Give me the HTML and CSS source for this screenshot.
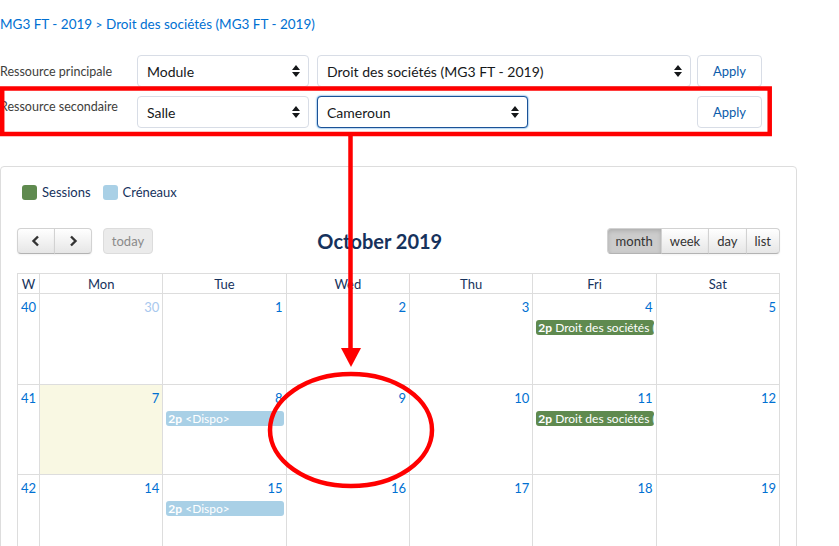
FILE: index.html
```html
<!DOCTYPE html>
<html lang="fr">
<head>
  <meta charset="UTF-8">
  <title>Planning - Droit des sociétés</title>
  <link rel="stylesheet" href="styles.css">
</head>
<body>
  <div class="page">
    <nav class="crumbs">
      <a href="#">MG3 FT - 2019</a> <span class="sep">&gt;</span> <a href="#">Droit des sociétés (MG3 FT - 2019)</a>
    </nav>

    <div class="filters">
      <div class="filter-row">
        <label class="filter-label">Ressource principale</label>
        <div class="select select-type">Module
          <svg class="caret" width="8" height="12" viewBox="0 0 8 12"><path d="M4 0 L8 5 H0 Z M0 7 H8 L4 12 Z" fill="#16181a"/></svg>
        </div>
        <div class="select select-wide">Droit des sociétés (MG3 FT - 2019)
          <svg class="caret" width="8" height="12" viewBox="0 0 8 12"><path d="M4 0 L8 5 H0 Z M0 7 H8 L4 12 Z" fill="#16181a"/></svg>
        </div>
        <button class="apply">Apply</button>
      </div>
      <div class="filter-row second">
        <label class="filter-label">Ressource secondaire</label>
        <div class="select select-type">Salle
          <svg class="caret" width="8" height="12" viewBox="0 0 8 12"><path d="M4 0 L8 5 H0 Z M0 7 H8 L4 12 Z" fill="#16181a"/></svg>
        </div>
        <div class="select select-short focused">Cameroun
          <svg class="caret" width="8" height="12" viewBox="0 0 8 12"><path d="M4 0 L8 5 H0 Z M0 7 H8 L4 12 Z" fill="#16181a"/></svg>
        </div>
        <button class="apply">Apply</button>
      </div>
    </div>

    <div class="calendar-card">
      <div class="legend">
        <span class="swatch swatch-session"></span><span class="legend-text">Sessions</span>
        <span class="swatch swatch-slot"></span><span class="legend-text">Créneaux</span>
      </div>

      <div class="toolbar">
        <div class="tb-left">
          <div class="btn-group">
            <button class="fc-btn"><svg width="10" height="12" viewBox="0 0 10 12"><path d="M7 1.5 L2.5 6 L7 10.5" fill="none" stroke="#333" stroke-width="2.4"/></svg></button>
            <button class="fc-btn"><svg width="10" height="12" viewBox="0 0 10 12"><path d="M3 1.5 L7.5 6 L3 10.5" fill="none" stroke="#333" stroke-width="2.4"/></svg></button>
          </div>
          <button class="fc-btn fc-today">today</button>
        </div>
        <h2 class="tb-title">October 2019</h2>
        <div class="btn-group">
          <button class="fc-btn active">month</button>
          <button class="fc-btn">week</button>
          <button class="fc-btn">day</button>
          <button class="fc-btn">list</button>
        </div>
      </div>

      <table class="cal">
        <thead>
          <tr>
            <th class="wk">W</th><th>Mon</th><th>Tue</th><th>Wed</th><th>Thu</th><th>Fri</th><th>Sat</th>
          </tr>
        </thead>
        <tbody>
          <tr>
            <td class="wk">40</td>
            <td><div class="num other">30</div></td>
            <td><div class="num">1</div></td>
            <td><div class="num">2</div></td>
            <td><div class="num">3</div></td>
            <td><div class="num">4</div><div class="event session"><b>2p</b> Droit des sociétés (MG3 FT - 2019)</div></td>
            <td><div class="num">5</div></td>
          </tr>
          <tr>
            <td class="wk">41</td>
            <td class="today"><div class="num">7</div></td>
            <td><div class="num">8</div><div class="event slot"><b>2p</b> &lt;Dispo&gt;</div></td>
            <td><div class="num">9</div></td>
            <td><div class="num">10</div></td>
            <td><div class="num">11</div><div class="event session"><b>2p</b> Droit des sociétés (MG3 FT - 2019)</div></td>
            <td><div class="num">12</div></td>
          </tr>
          <tr>
            <td class="wk">42</td>
            <td><div class="num">14</div></td>
            <td><div class="num">15</div><div class="event slot"><b>2p</b> &lt;Dispo&gt;</div></td>
            <td><div class="num">16</div></td>
            <td><div class="num">17</div></td>
            <td><div class="num">18</div></td>
            <td><div class="num">19</div></td>
          </tr>
        </tbody>
      </table>
    </div>

    <!-- annotations drawn over the screenshot -->
    <svg class="annotations" width="839" height="546" viewBox="0 0 839 546">
      <g fill="none" stroke="#ff0000" stroke-width="4.5">
        <rect x="2.2" y="88.5" width="767.5" height="45.5"/>
        <line x1="350.5" y1="136" x2="350.5" y2="350"/>
        <ellipse cx="351" cy="430" rx="81" ry="56"/>
      </g>
      <polygon points="341,348 361,348 351,367" fill="#ff0000"/>
    </svg>
  </div>
</body>
</html>
```

FILE: styles.css
```css
body {
  margin: 0;
  padding: 0;
  font-family: 'Lato', 'Open Sans', sans-serif;
  background-color: #fff;
  color: #16325c;
}

.page {
  position: relative;
  width: 839px;
  height: 546px;
  overflow: hidden;
}

a {
  color: #0070d2;
  text-decoration: none;
}

.crumbs {
  padding-top: 14px;
  font-size: 13.5px;
  line-height: 20px;
  color: #0070d2;
}

.crumbs .sep {
  font-size: 12px;
}

/* filters */
.filters {
  margin-top: 20px;
  width: 762px;
}

.filter-row {
  display: flex;
  align-items: center;
  height: 32px;
}

.filter-row.second {
  margin-top: 9px;
}

.filter-label {
  width: 137px;
  flex-shrink: 0;
  font-size: 12.5px;
  color: #3e3e3c;
}

.filter-row.second .filter-label {
  align-self: flex-start;
  padding-top: 3px;
}

.select {
  box-sizing: border-box;
  height: 32px;
  display: flex;
  align-items: center;
  justify-content: space-between;
  padding: 0 8px 0 9px;
  border: 1px solid #d8dde6;
  border-radius: 4px;
  font-size: 14px;
  color: #16181a;
  background: #fff;
}

.select-type {
  width: 172px;
  margin-right: 8px;
}

.select-wide {
  width: 374px;
}

.select-short {
  width: 211px;
}

.select.focused {
  border-color: #1b5297;
  box-shadow: 0 0 2px #0070d2;
}

.apply {
  margin-left: auto;
  width: 65px;
  height: 32px;
  border: 1px solid #d8dde6;
  border-radius: 4px;
  background: #fff;
  color: #0b5cab;
  font-family: inherit;
  font-size: 13px;
}

/* calendar card */
.calendar-card {
  margin-top: 38px;
  width: 797px;
  box-sizing: border-box;
  border: 1px solid #dddddd;
  border-radius: 4px;
  padding: 17px 16px 20px 16px;
}

.legend {
  display: flex;
  align-items: center;
  padding-left: 5px;
  height: 16px;
  font-size: 13px;
}

.swatch {
  width: 15px;
  height: 15px;
  border-radius: 3px;
  margin-right: 5px;
}

.swatch-session {
  background: #5f8a4f;
}

.swatch-slot {
  background: #a9d0e6;
  margin-left: 12px;
}

.toolbar {
  display: flex;
  align-items: center;
  margin-top: 28px;
  height: 26px;
}

.tb-left {
  display: flex;
  align-items: center;
}

.tb-title {
  flex: 1;
  margin: 0;
  text-align: center;
  font-size: 20px;
  font-weight: bold;
  color: #16325c;
}

.btn-group {
  display: flex;
}

.fc-btn {
  height: 26px;
  padding: 0 8px;
  font-family: inherit;
  font-size: 13px;
  color: #333;
  background: linear-gradient(#ffffff, #e6e6e6);
  border: 1px solid #d2d2d2;
  border-bottom-color: #b3b3b3;
  box-shadow: 0 1px 2px rgba(0, 0, 0, 0.05);
  display: flex;
  align-items: center;
  justify-content: center;
}

.btn-group .fc-btn {
  border-radius: 0;
  margin-left: -1px;
}

.btn-group .fc-btn:first-child {
  border-radius: 4px 0 0 4px;
  margin-left: 0;
}

.btn-group .fc-btn:last-child {
  border-radius: 0 4px 4px 0;
}

.tb-left .btn-group .fc-btn {
  width: 38px;
}

.fc-today {
  margin-left: 11px;
  width: 50px;
  border-radius: 4px;
  background: #ebebeb;
  color: #8a8a8a;
  box-shadow: none;
  border-color: #dcdcdc;
}

.fc-btn.active {
  background: #cccccc;
  box-shadow: inset 0 2px 4px rgba(0, 0, 0, 0.15);
}

/* month grid */
.cal {
  margin-top: 19px;
  width: 763px;
  border-collapse: collapse;
  table-layout: fixed;
}

.cal th, .cal td {
  border: 1px solid #dddddd;
  padding: 0;
}

.cal th {
  height: 19px;
  font-size: 13px;
  font-weight: normal;
  color: #16325c;
}

.cal th.wk {
  width: 21px;
}

.cal tbody tr {
  height: 90.5px;
}

.cal td {
  vertical-align: top;
}

.cal td.wk {
  font-size: 13px;
  color: #0070d2;
  padding: 3px 0 0 3px;
  line-height: 20px;
}

.cal td.today {
  background: #f9f8e3;
}

.num {
  text-align: right;
  font-size: 13px;
  line-height: 20px;
  padding: 3px 3px 0 0;
  color: #0070d2;
}

.num.other {
  color: #a8c8ee;
}

.event {
  margin: 3px 2px 0 3px;
  height: 15px;
  line-height: 15px;
  padding-left: 2px;
  border-radius: 3px;
  font-size: 12px;
  color: #fff;
  white-space: nowrap;
  overflow: hidden;
}

.event.session {
  background: #5f8a4f;
}

.event.slot {
  background: #a9d0e6;
}

.annotations {
  position: absolute;
  top: 0;
  left: 0;
  pointer-events: none;
}
```
